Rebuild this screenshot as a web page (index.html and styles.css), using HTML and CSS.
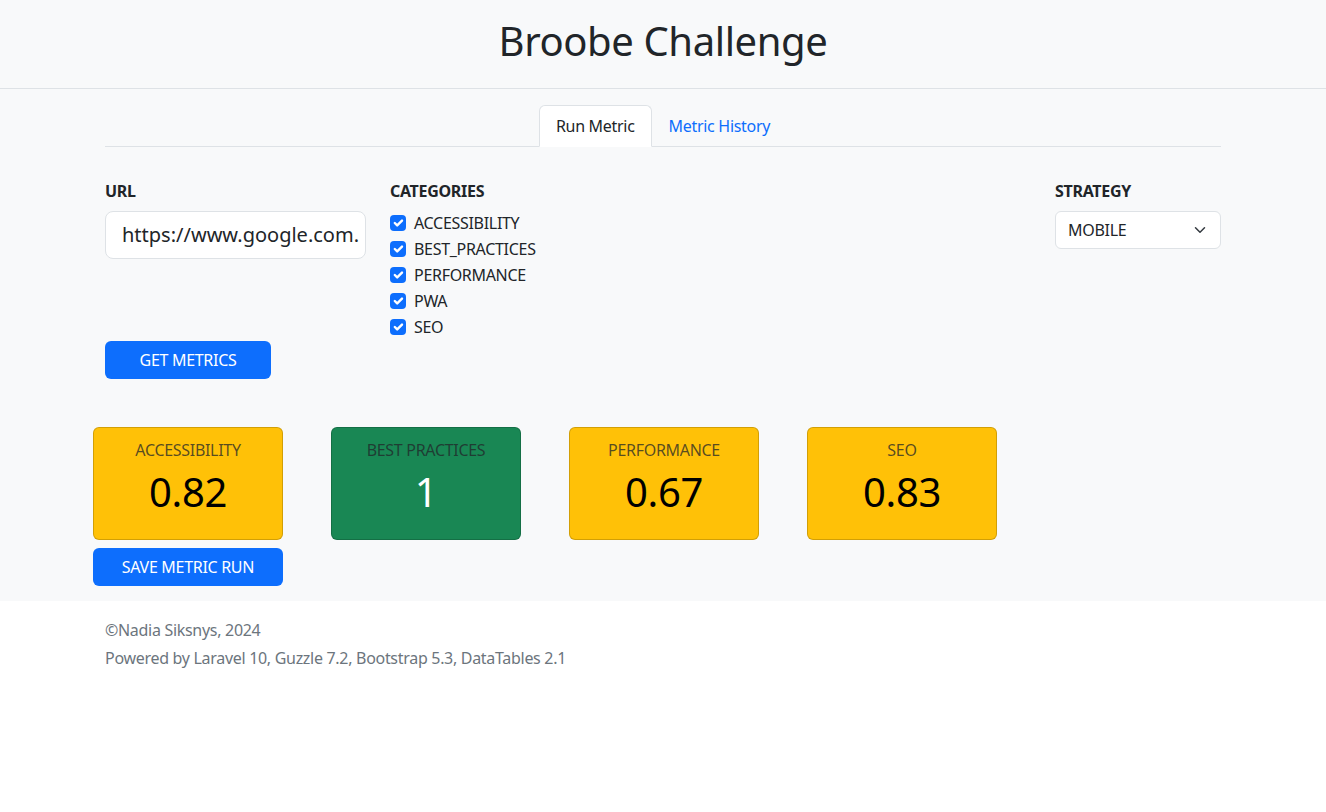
FILE: index.html
```html
<!DOCTYPE html>
<html lang="en">
<head>
<meta charset="utf-8">
<title>Broobe Challenge</title>
<link rel="stylesheet" href="styles.css">
</head>
<body>
<header class="site-header">
  <h1 class="site-title">Broobe Challenge</h1>
</header>
<main class="main">
  <div class="container">
    <ul class="tabs">
      <li class="tab tab-active">Run Metric</li>
      <li class="tab tab-link">Metric History</li>
    </ul>
    <div class="tab-content">
      <div class="form-row">
        <div class="col col-url">
          <div class="form-label">URL</div>
          <div class="url-input"><span class="url-text">https://www.google.com.</span></div>
        </div>
        <div class="col col-cats">
          <div class="form-label">CATEGORIES</div>
          <div class="check"><span class="box"><svg viewBox="0 0 20 20" width="16" height="16"><path d="m6 10 3 3 6-6" fill="none" stroke="#fff" stroke-width="3" stroke-linecap="round" stroke-linejoin="round"/></svg></span><span>ACCESSIBILITY</span></div>
          <div class="check"><span class="box"><svg viewBox="0 0 20 20" width="16" height="16"><path d="m6 10 3 3 6-6" fill="none" stroke="#fff" stroke-width="3" stroke-linecap="round" stroke-linejoin="round"/></svg></span><span>BEST_PRACTICES</span></div>
          <div class="check"><span class="box"><svg viewBox="0 0 20 20" width="16" height="16"><path d="m6 10 3 3 6-6" fill="none" stroke="#fff" stroke-width="3" stroke-linecap="round" stroke-linejoin="round"/></svg></span><span>PERFORMANCE</span></div>
          <div class="check"><span class="box"><svg viewBox="0 0 20 20" width="16" height="16"><path d="m6 10 3 3 6-6" fill="none" stroke="#fff" stroke-width="3" stroke-linecap="round" stroke-linejoin="round"/></svg></span><span>PWA</span></div>
          <div class="check"><span class="box"><svg viewBox="0 0 20 20" width="16" height="16"><path d="m6 10 3 3 6-6" fill="none" stroke="#fff" stroke-width="3" stroke-linecap="round" stroke-linejoin="round"/></svg></span><span>SEO</span></div>
        </div>
        <div class="col col-strategy">
          <div class="form-label">STRATEGY</div>
          <div class="select"><span>MOBILE</span><svg class="chev" viewBox="0 0 16 16" width="16" height="12"><path d="m2 5 6 6 6-6" fill="none" stroke="#343a40" stroke-width="2" stroke-linecap="round" stroke-linejoin="round"/></svg></div>
        </div>
      </div>
      <div class="btn btn-get">GET METRICS</div>
      <div class="cards">
        <div class="card card-warning"><div class="card-title">ACCESSIBILITY</div><div class="card-value">0.82</div></div>
        <div class="card card-success"><div class="card-title">BEST PRACTICES</div><div class="card-value">1</div></div>
        <div class="card card-warning"><div class="card-title">PERFORMANCE</div><div class="card-value">0.67</div></div>
        <div class="card card-warning"><div class="card-title">SEO</div><div class="card-value">0.83</div></div>
      </div>
      <div class="btn btn-save">SAVE METRIC RUN</div>
    </div>
  </div>
</main>
<footer class="footer">
  <div class="container">
    <p class="footer-line">©Nadia Siksnys, 2024</p>
    <p class="footer-line">Powered by Laravel 10, Guzzle 7.2, Bootstrap 5.3, DataTables 2.1</p>
  </div>
</footer>
</body>
</html>
```
FILE: styles.css
```css
* { box-sizing: border-box; }
html, body { margin: 0; padding: 0; }
body {
  font-family: "Noto Sans", "Liberation Sans", sans-serif;
  font-size: 16px;
  line-height: 24px;
  letter-spacing: -0.3px;
  color: #212529;
  background: #fff;
}
.site-header {
  background: #f8f9fa;
  border-bottom: 1px solid #dee2e6;
  padding: 17px 0 23px;
  text-align: center;
}
.site-title {
  margin: 0;
  font-size: 40px;
  line-height: 48px;
  font-weight: 400;
  letter-spacing: -0.4px;
  color: #212529;
}
.main {
  background: #f8f9fa;
  padding: 16px 0 15px;
}
.container {
  width: 1140px;
  margin: 0 auto;
  padding: 0 12px;
}
.tabs {
  list-style: none;
  margin: 0;
  padding: 0;
  display: flex;
  justify-content: center;
  border-bottom: 1px solid #dee2e6;
}
.tab {
  padding: 8px 16px;
  border: 1px solid transparent;
  border-top-left-radius: 6px;
  border-top-right-radius: 6px;
  margin-bottom: -1px;
}
.tab-active {
  background: #fff;
  border-color: #dee2e6 #dee2e6 #fff;
  color: #212529;
}
.tab-link { color: #0d6efd; }
.tab-content { padding-top: 32px; }
.form-row {
  display: flex;
}
.col-url { width: 261px; margin-right: 24px; }
.col-cats { width: 261px; }
.col-strategy { width: 166px; margin-left: auto; }
.form-label {
  font-weight: 700;
  margin-bottom: 8px;
}
.url-input {
  height: 48px;
  background: #fff;
  border: 1px solid #dee2e6;
  border-radius: 8px;
  padding: 8px 2px 8px 16px;
  font-size: 20px;
  line-height: 30px;
  letter-spacing: 0;
  white-space: nowrap;
}
.url-text { display: block; }
.check {
  display: flex;
  align-items: center;
  height: 24px;
  margin-bottom: 2px;
  color: #212529;
}
.box {
  width: 16px;
  height: 16px;
  border-radius: 4px;
  background: #0d6efd;
  margin-right: 8px;
  display: flex;
}
.select {
  height: 38px;
  background: #fff;
  border: 1px solid #dee2e6;
  border-radius: 6px;
  padding: 6px 12px;
  display: flex;
  align-items: center;
  justify-content: space-between;
}
.btn {
  background: #0d6efd;
  color: #fff;
  border-radius: 6px;
  height: 38px;
  line-height: 24px;
  padding: 7px 12px;
  text-align: center;
}
.btn-get { width: 166px; }
.cards {
  display: flex;
  gap: 48px;
  margin: 48px 0 0 -12px;
}
.card {
  width: 190px;
  border: 1px solid rgba(0,0,0,0.175);
  border-radius: 6px;
  padding: 10px 16px 23px;
  text-align: center;
}
.card-warning { background: #ffc107; color: #000; }
.card-success { background: #198754; color: #fff; }
.card-title {
  color: rgba(33,37,41,0.75);
  margin-bottom: 6px;
}
.card-value {
  font-size: 40px;
  line-height: 48px;
}
.btn-save {
  width: 190px;
  margin: 8px 0 0 -12px;
}
.footer {
  background: #fff;
  padding: 17px 0;
}
.footer-line {
  margin: 0 0 4px;
  color: #6c757d;
}
```
